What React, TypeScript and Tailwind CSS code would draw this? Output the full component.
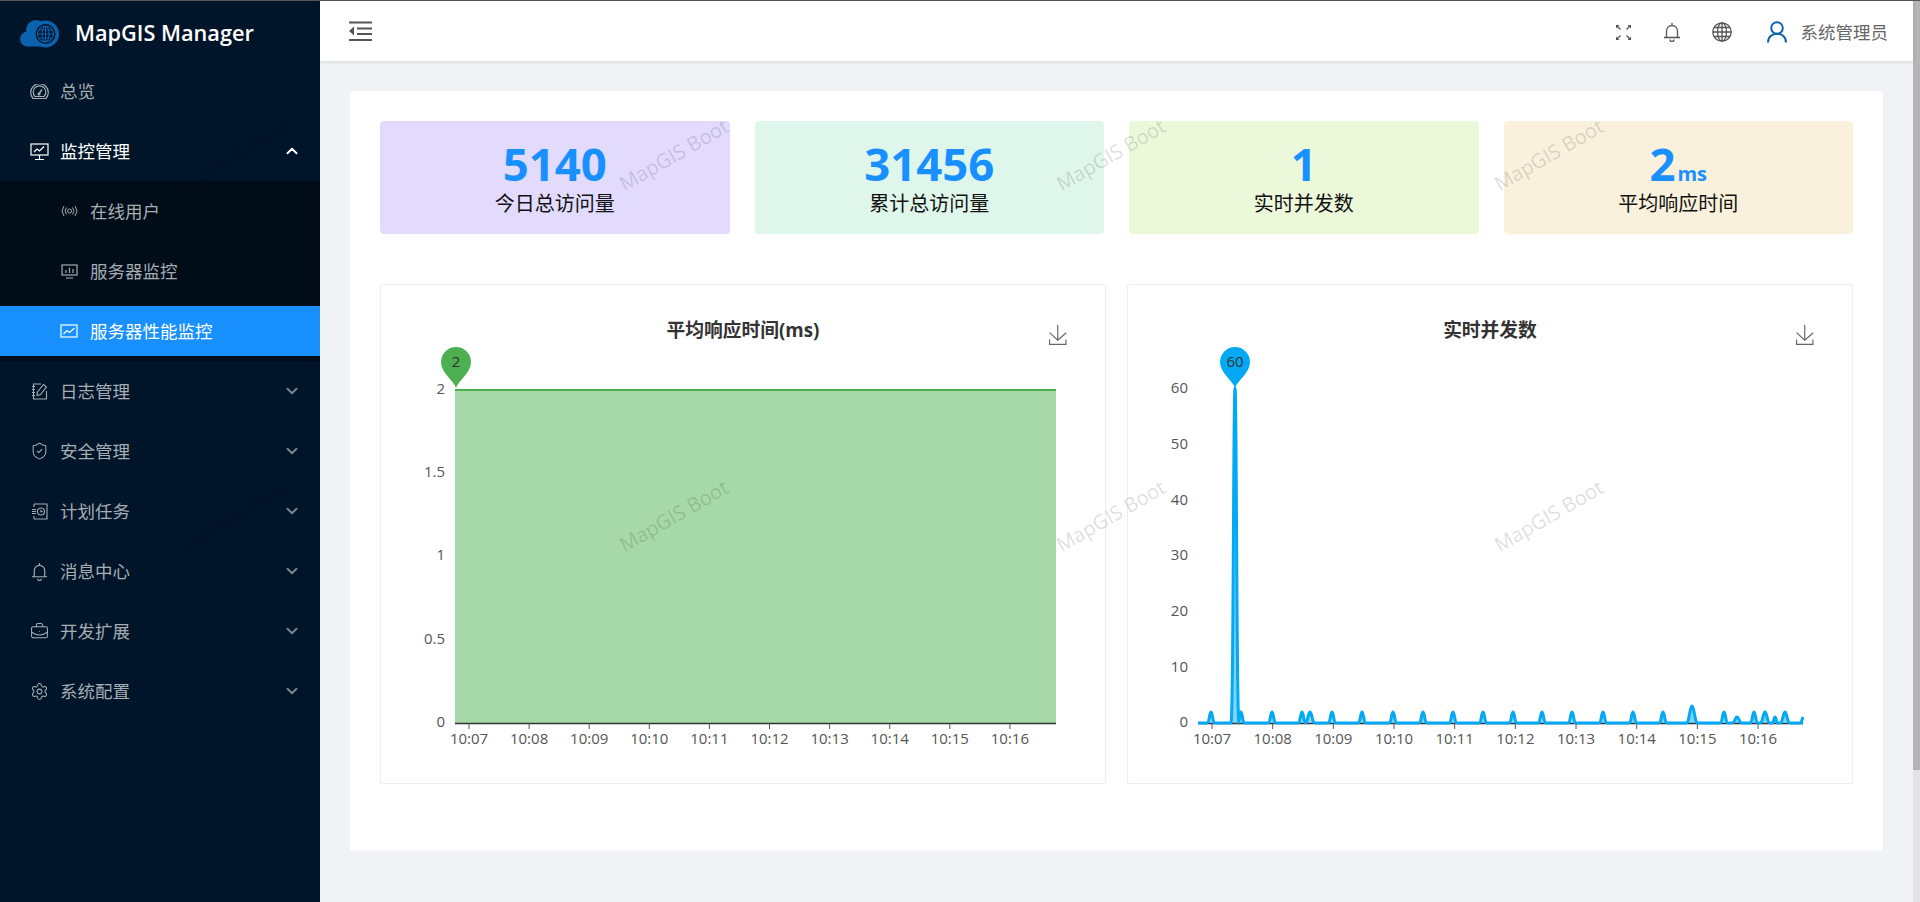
import { ChevronDown, ChevronUp, Settings, ShieldCheck, BriefcaseBusiness } from 'lucide-react';
import type { ReactNode } from 'react';

const font = 'font-["Open_Sans","Noto_Sans_CJK_SC",sans-serif]';

// sidebar icons that lucide has no close match for
const DashboardIcon = () => (
  <svg width="19" height="15" viewBox="0 0 19 15" fill="none" stroke="currentColor" strokeWidth="1.200">
    <path d="M3 14.500A8.800 8.800 0 1 1 16 14.500zM5 12.500A6.300 6.300 0 1 1 14 12.500z" />
    <path d="M8.500 10.500L12 5.500" strokeWidth="1.500" />
    <circle cx="9" cy="10" r="1" />
  </svg>
);
const PresentationIcon = () => (
  <svg width="19" height="19" viewBox="0 0 19 19" fill="none" stroke="currentColor" strokeWidth="1.200">
    <rect x="1" y="2" width="17" height="11" />
    <path d="M4 10l3-3 2.500 2L14 4.500M9.500 13v4M5 17.500h9" />
  </svg>
);
const SignalIcon = () => (
  <svg width="17" height="12" viewBox="0 0 17 12" fill="none" stroke="currentColor" strokeWidth="1">
    <path d="M3 1L1 6l2 5M5.500 2.500L4 6l1.500 3.500M14 1l2 5-2 5M11.500 2.500L13 6l-1.500 3.500" />
    <circle cx="8.500" cy="6" r="2" />
  </svg>
);
const ServerIcon = () => (
  <svg width="17" height="15" viewBox="0 0 17 15" fill="none" stroke="currentColor" strokeWidth="1.200">
    <rect x="1" y="1" width="15" height="10" />
    <path d="M5 9V6M8.500 9V3.500M12 9V5M5 14h7" />
  </svg>
);
const ChartIcon = () => (
  <svg width="18" height="14" viewBox="0 0 18 14" fill="none" stroke="currentColor" strokeWidth="1.200">
    <rect x="1" y="1" width="16" height="12" />
    <path d="M3.500 10l3.500-3.500 2.500 2L14.500 4" />
  </svg>
);
const NoteIcon = () => (
  <svg width="17" height="17" viewBox="0 0 17 17" fill="none" stroke="currentColor" strokeWidth="1.100">
    <path d="M10 1H2.500v15h13V8M1 3.500h3M1 6.500h3M1 9.500h3M1 12.500h3" />
    <path d="M6 12.500l.5-3.500L12.500 1.500l3 2.500L9.500 11.500z" />
  </svg>
);
const ScheduleIcon = () => (
  <svg width="17" height="17" viewBox="0 0 17 17" fill="none" stroke="currentColor" strokeWidth="1.100">
    <path d="M3 1h13v15H3M3 1v3M3 13v3M1 6.500h4M1 8.500h4M1 10.500h4" />
    <circle cx="10" cy="8.500" r="3.500" />
    <path d="M10 6.800v1.800h1.600" />
  </svg>
);
const BellIcon = ({ size, strokeWidth }: { size: number; strokeWidth: number }) => (
  <svg width={size} height={size} viewBox="0 0 20 20" fill="none" stroke="currentColor" strokeWidth={strokeWidth}>
    <path d="M4.500 15.500V9a5.500 5.500 0 0 1 11 0v6.500M2 15.500h16M10 1v2.500M8 17.500a2 2 0 0 0 4 0" />
  </svg>
);
const LogoIcon = () => (
  <svg width="40" height="28" viewBox="0 0 40 28">
    <g fill="#0b62ad">
      <circle cx="16" cy="10" r="10" />
      <circle cx="7.500" cy="19" r="7.500" />
      <rect x="7" y="14" width="18" height="12.500" />
      <circle cx="25.500" cy="14" r="13.500" />
    </g>
    <circle cx="25.500" cy="14" r="10" fill="#001529" />
    <g fill="none" stroke="#0b62ad" strokeWidth="1.100">
      <circle cx="25.500" cy="14" r="8" />
      <ellipse cx="25.500" cy="14" rx="3.500" ry="8" />
      <path d="M25.500 6v16M17.500 14h16M19 10h13M19 18h13" />
    </g>
  </svg>
);
const IndentIcon = () => (
  <svg width="24" height="20" viewBox="0 0 24 20" fill="#555">
    <rect x="0" y="0.500" width="23" height="2" />
    <rect x="8" y="6.500" width="15" height="2" />
    <rect x="8" y="12" width="15" height="2" />
    <rect x="0" y="18" width="23" height="2" />
    <path d="M0 10L5 5.500v9z" />
  </svg>
);
const ExpandIcon = () => (
  <svg width="17" height="17" viewBox="0 0 17 17" fill="none" stroke="#555" strokeWidth="1.300">
    <path d="M1.500 1.500l4 4M15.500 1.500l-4 4M1.500 15.500l4-4M15.500 15.500l-4-4" />
    <path d="M1 1h3.500L1 4.500zM16 1h-3.500L16 4.500zM1 16h3.500L1 12.500zM16 16h-3.500L16 12.500z" fill="#555" stroke="none" />
  </svg>
);
const GlobeIcon = () => (
  <svg width="20" height="20" viewBox="0 0 20 20" fill="none" stroke="#555" strokeWidth="1.300">
    <circle cx="10" cy="10" r="9.200" />
    <ellipse cx="10" cy="10" rx="4.500" ry="9.200" />
    <path d="M10 1v18M1 10h18M2.200 5.500h15.600M2.200 14.500h15.600" />
  </svg>
);
const UserIcon = () => (
  <svg width="20" height="22" viewBox="0 0 20 22" fill="none" stroke="#0b62ad" strokeWidth="2">
    <circle cx="10" cy="7" r="5.800" />
    <path d="M1 21.500c0-5.500 4-8.700 9-8.700s9 3.200 9 8.700" />
  </svg>
);

interface MenuEntry {
  label: string;
  icon: ReactNode;
  arrow?: boolean;
}

const lowerMenu: MenuEntry[] = [
  { label: '日志管理', icon: <NoteIcon />, arrow: true },
  { label: '安全管理', icon: <ShieldCheck size={20} strokeWidth={1.3} />, arrow: true },
  { label: '计划任务', icon: <ScheduleIcon />, arrow: true },
  { label: '消息中心', icon: <BellIcon size={19} strokeWidth={1.200} />, arrow: true },
  { label: '开发扩展', icon: <BriefcaseBusiness size={19} strokeWidth={1.3} />, arrow: true },
  { label: '系统配置', icon: <Settings size={19} strokeWidth={1.3} />, arrow: true },
];

function MenuRow({ label, icon, arrow }: MenuEntry) {
  return (
    <div className="h-[50px] mb-[10px] flex items-center pl-[30px] pr-[19px] text-[17.5px] text-[#a6adb4]">
      <span className="w-[19px] flex justify-center shrink-0">{icon}</span>
      <span className="ml-[11px] flex-1">{label}</span>
      {arrow && <ChevronDown size={18} strokeWidth={2.500} className="text-[#7b858f]" />}
    </div>
  );
}

function SubRow({ label, icon, active }: { label: string; icon: ReactNode; active?: boolean }) {
  return (
    <div
      className={
        active
          ? 'h-[50px] flex items-center pl-[60px] text-[17.5px] bg-[#1890ff] text-white'
          : 'h-[50px] mb-[10px] flex items-center pl-[60px] text-[17.5px] text-[#a6adb4]'
      }
    >
      <span className="w-[18px] flex justify-center shrink-0">{icon}</span>
      <span className="ml-[12px]">{label}</span>
    </div>
  );
}

function Sidebar() {
  return (
    <aside className="w-[320px] shrink-0 bg-[#001529] h-[901px]">
      <div className="h-[65px] flex items-center pl-[20px]">
        <LogoIcon />
        <span className="ml-[15px] text-[21.7px] font-semibold text-white">MapGIS Manager</span>
      </div>
      <MenuRow label="总览" icon={<DashboardIcon />} />
      <div className="h-[50px] mb-[5px] flex items-center pl-[30px] pr-[19px] text-[17.5px] text-white">
        <span className="w-[19px] flex justify-center shrink-0">
          <PresentationIcon />
        </span>
        <span className="ml-[11px] flex-1">监控管理</span>
        <ChevronUp size={18} strokeWidth={2.500} />
      </div>
      <div className="bg-[#000c17] pt-[5px] pb-[5px] mb-[5px]">
        <SubRow label="在线用户" icon={<SignalIcon />} />
        <SubRow label="服务器监控" icon={<ServerIcon />} />
        <SubRow label="服务器性能监控" icon={<ChartIcon />} active />
      </div>
      {lowerMenu.map((m) => (
        <MenuRow key={m.label} {...m} />
      ))}
    </aside>
  );
}

function Header() {
  return (
    <header className="h-[60px] bg-white flex items-center pl-[29px] shadow-[0_1px_4px_rgba(0,21,41,0.12)] relative">
      <IndentIcon />
      <div className="ml-auto mt-[2px] flex items-center text-[#555]">
        <ExpandIcon />
        <span className="ml-[30px]">
          <BellIcon size={20} strokeWidth={1.300} />
        </span>
        <span className="ml-[30px]">
          <GlobeIcon />
        </span>
        <span className="ml-[35px]">
          <UserIcon />
        </span>
        <span className="ml-[14px] mr-[25px] text-[17.5px] text-[#666]">系统管理员</span>
      </div>
    </header>
  );
}

const stats = [
  { value: '5140', label: '今日总访问量', bg: 'bg-[#e2dbfe]' },
  { value: '31456', label: '累计总访问量', bg: 'bg-[#dff6eb]' },
  { value: '1', label: '实时并发数', bg: 'bg-[#ecf8da]' },
  { value: '2', unit: 'ms', label: '平均响应时间', bg: 'bg-[#faf1dd]' },
];

function StatCard({ value, unit, label, bg }: { value: string; unit?: string; label: string; bg: string }) {
  return (
    <div className={`${bg} h-[113px] rounded-[4px] flex flex-col items-center justify-center`}>
      <div className="text-[45.5px] leading-[52px] font-bold text-[#1890ff]">
        {value}
        {unit && <span className="text-[20px] leading-none ml-[2px]">{unit}</span>}
      </div>
      <div className="text-[20px] leading-[30px] text-[#111]">{label}</div>
    </div>
  );
}

const timeLabels = ['10:07', '10:08', '10:09', '10:10', '10:11', '10:12', '10:13', '10:14', '10:15', '10:16'];

function Pin({ x, color, text }: { x: number; color: string; text: string }) {
  return (
    <g>
      <path
        d={`M${x} 388C${x - 2} 381 ${x - 15} 373 ${x - 15} 362A15 15 0 1 1 ${x + 15} 362C${x + 15} 373 ${x + 2} 381 ${x} 388z`}
        fill={color}
      />
      <text x={x} y={367} textAnchor="middle" fontSize="15" fill="#333">
        {text}
      </text>
    </g>
  );
}

function Axes({ x0, x1, first, step, yLabels, labelX }: {
  x0: number;
  x1: number;
  first: number;
  step: number;
  yLabels: [string, number][];
  labelX: number;
}) {
  return (
    <g fontSize="15" fill="#555">
      <path d={`M${x0} 723.500H${x1}`} stroke="#333" strokeWidth="1.500" />
      {timeLabels.map((t, i) => (
        <g key={t}>
          <path d={`M${first + i * step} 723v6`} stroke="#555" strokeWidth="1" />
          <text x={first + i * step} y={744} textAnchor="middle">
            {t}
          </text>
        </g>
      ))}
      {yLabels.map(([t, y]) => (
        <text key={t} x={labelX} y={y + 5} textAnchor="end">
          {t}
        </text>
      ))}
    </g>
  );
}

// [x, height in px, half width]
const peaks: [number, number, number][] = [
  [1211, 11, 4], [1235, 335, 4], [1241, 11, 3.500], [1272, 11, 4], [1302, 11, 4], [1310, 11, 5],
  [1332, 11, 4], [1362, 11, 4], [1393, 11, 4], [1423, 11, 4], [1453, 11, 4], [1483, 11, 4], [1513, 11, 4],
  [1542, 11, 4], [1572, 11, 4], [1603, 11, 4], [1633, 11, 4], [1663, 11, 4], [1692, 17, 6],
  [1724, 11, 4], [1737, 6, 5], [1754, 11, 4], [1765, 11, 5], [1775, 6, 3], [1785, 11, 5],
];

function concurrencyPath() {
  let d = 'M1198 723';
  peaks.forEach(([x, h, w]) => {
    const y = 723 - h;
    d += `L${x - w} 723C${x - w * 0.4} 723 ${x - w * 0.4} ${y} ${x} ${y}C${x + w * 0.4} ${y} ${x + w * 0.4} 723 ${x + w} 723`;
  });
  d += 'L1801 723L1803 717';
  return d;
}

function ChartCard({ title, viewBox, children }: { title: string; viewBox: string; children: ReactNode }) {
  return (
    <div className="h-[500px] border border-[#eee] rounded-[2px] relative">
      <div className="h-[60px] pt-[33px] text-center text-[18.75px] leading-[24px] font-bold text-[#333]">{title}</div>
      <svg width="60" height="60" viewBox="0 0 60 60" fill="none" stroke="#666" strokeWidth="3.500" className="absolute top-[40px] right-[37px] w-[20px] h-[20px]">
        <path d="M4.700 22.900L29.300 45.500L54.700 23.400M4.600 43.600L4.600 58L53.800 58L53.800 43.600M29.200 45.100L29.200 0" />
      </svg>
      <svg viewBox={viewBox} className="block w-[724px] h-[438px]">
        {children}
      </svg>
    </div>
  );
}

function Watermarks() {
  const spots: [number, number][] = [];
  [155, 516].forEach((y) => [235, 674, 1111, 1549].forEach((x) => spots.push([x, y])));
  return (
    <div className="absolute inset-0 overflow-hidden pointer-events-none">
      {spots.map(([x, y]) => (
        <span
          key={`${x}-${y}`}
          className="absolute -rotate-30 text-[20px] text-[#000000]/[0.15] -translate-x-1/2 -translate-y-1/2 whitespace-nowrap"
          style={{ left: x, top: y }}
        >
          MapGIS Boot
        </span>
      ))}
    </div>
  );
}

export default function App() {
  const line = concurrencyPath();
  return (
    <div className={`${font} h-[902px] overflow-hidden relative bg-[#f0f2f5]`}>
      <div className="h-px bg-[#555]" />
      <div className="flex">
        <Sidebar />
        <main className="flex-1 min-w-0">
          <Header />
          <div className="pt-[30px] pl-[30px] pr-[30px]">
            <div className="bg-white rounded-[3px] h-[760px] p-[30px]">
              <div className="grid grid-cols-4 gap-[25px]">
                {stats.map((s) => (
                  <StatCard key={s.label} {...s} />
                ))}
              </div>
              <div className="grid grid-cols-2 gap-[21px] mt-[50px]">
                <ChartCard title="平均响应时间(ms)" viewBox="381 345 724 438">
                  <rect x="455" y="390" width="601" height="333" fill="#a7d8a8" />
                  <path d="M455 390H1056" stroke="#4caf50" strokeWidth="2" />
                  <Axes
                    x0={455}
                    x1={1056}
                    first={469}
                    step={60.1}
                    labelX={445}
                    yLabels={[['2', 389], ['1.5', 472], ['1', 555], ['0.5', 639], ['0', 722]]}
                  />
                  <Pin x={456} color="#4caf50" text="2" />
                </ChartCard>
                <ChartCard title="实时并发数" viewBox="1128 345 724 438">
                  <Axes
                    x0={1198}
                    x1={1803}
                    first={1212}
                    step={60.67}
                    labelX={1188}
                    yLabels={[['60', 388], ['50', 444], ['40', 500], ['30', 555], ['20', 611], ['10', 667], ['0', 722]]}
                  />
                  <path d={`${line}V723z`} fill="#03a9f4" fillOpacity="0.5" />
                  <path d={line} fill="none" stroke="#03a9f4" strokeWidth="3" />
                  <Pin x={1235} color="#03a9f4" text="60" />
                </ChartCard>
              </div>
            </div>
          </div>
        </main>
        <div className="w-[7px] shrink-0 h-[901px] bg-[#e3e3e3]">
          <div className="h-[769px] bg-[#b5b5b5]" />
        </div>
      </div>
      <Watermarks />
    </div>
  );
}
